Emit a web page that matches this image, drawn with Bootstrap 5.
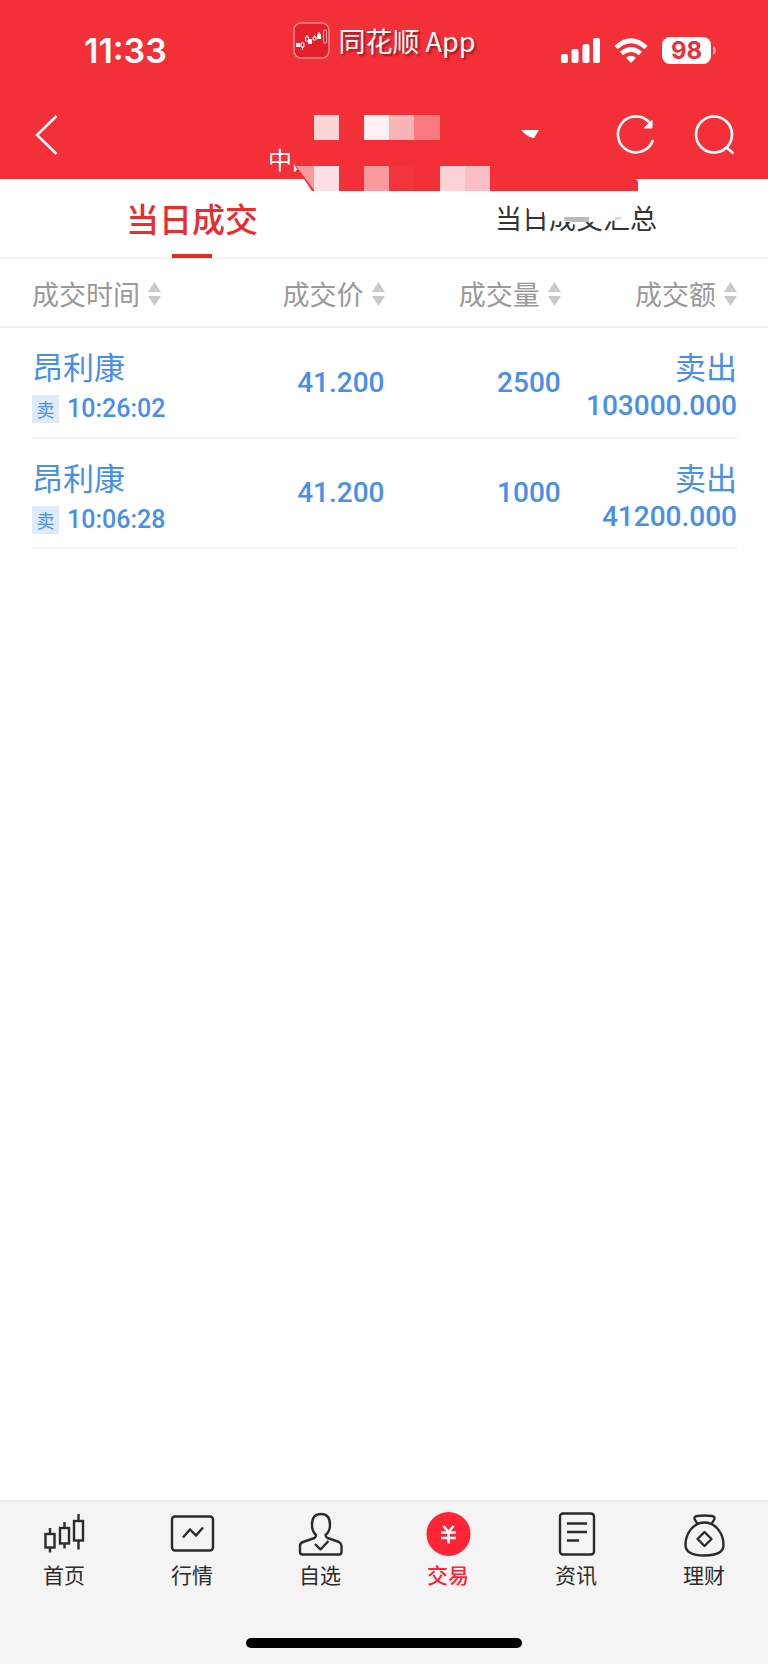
<!DOCTYPE html>
<html lang="zh-CN">
<head>
<meta charset="utf-8">
<meta name="viewport" content="width=device-width, initial-scale=1">
<title>当日成交</title>
<link href="https://cdn.jsdelivr.net/npm/bootstrap@5.3.0/dist/css/bootstrap.min.css" rel="stylesheet">
<style>
  body { font-family: "Noto Sans CJK SC", sans-serif; color: #333; background: #fff; }
  button { font-family: inherit; }
  .app-head { background: #f32f38; z-index: 2; }
  .status-row { height: 91px; padding: 10px 52px 0; }
  .side { flex: 1 1 0; }
  .clock { font: 600 34px/40px Inter, sans-serif; padding-left: 32px; }
  .signals { gap: 14px; }
  .brand { font-size: 27px; line-height: 32px; gap: 9px; padding-bottom: 20px; text-shadow: 2px 2px 2px rgba(110, 0, 0, .55); }
  .title-row { height: 88px; }
  .plain { border: 0; background: none; padding: 0; color: inherit; }
  .account { width: 232px; font-size: 24px; line-height: 32px; padding-bottom: 4px; }
  .account svg { left: 0; top: 0; pointer-events: none; }
  .tools { gap: 36px; }
  .tab-row { height: 80px; border-bottom: 2px solid #f1f1f1; }
  .tab-btn { font-size: 27px; line-height: 40px; }
  .tab-btn.active { font-size: 33px; font-weight: 500; color: #eb2b2e; }
  .tab-btn.active::after { content: ""; position: absolute; left: 50%; bottom: -1px; width: 40px; height: 4px; margin-left: -20px; background: #eb2729; }
  .tab-btn svg { left: 0; top: 0; pointer-events: none; }
  .deals-wrap { padding: 0 31px 0 32px; }
  .deals { table-layout: fixed; width: 100%; margin: 0; }
  .deals th, .deals td { padding: 0; text-align: right; vertical-align: middle; }
  .deals th:first-child, .deals td:first-child { text-align: left; }
  .deals thead tr { position: relative; height: 69px; }
  .deals th:first-child::after { content: ""; position: absolute; left: -32px; right: -31px; bottom: 0; height: 2px; background: #f1f1f1; }
  .deals thead button { font-size: 27px; line-height: 40px; color: #999; font-weight: 400; gap: 8px; }
  .deals tbody td { height: 110px; border-bottom: 2px solid #f5f5f5; color: #478fec; }
  .deals td.two-line { vertical-align: top; padding-top: 16px; }
  .stock { font-size: 31px; line-height: 44px; }
  .side-tag { width: 27px; height: 28px; font-size: 18px; line-height: 28px; background: #dfebfb; text-align: center; }
  .hour { font: 500 25px/42px Roboto, sans-serif; }
  .num { font: 500 28px/36px Roboto, sans-serif; }
  .bottom-nav { background: #f4f4f4; border-top: 2px solid #e9e9e9; }
  .bottom-nav a { color: #2b2b2b; font-size: 21px; line-height: 28px; padding-top: 10px; }
  .bottom-nav a.active { color: #ff2436; font-weight: 500; }
  .home-bar { width: 36%; height: 10px; border-radius: 5px; background: #000; margin: 50px auto 16px; }
</style>
</head>
<body>
<div class="min-vh-100 d-flex flex-column">
  <header class="app-head text-white position-relative">
    <div class="status-row d-flex align-items-center">
      <div class="side"><div class="clock">11:33</div></div>
      <div class="brand d-flex align-items-center">
        <svg width="37" height="37" viewBox="0 0 37 37" fill="none">
          <rect x="1" y="1" width="35" height="35" rx="7" fill="#e6202a" stroke="#ff8b8e" stroke-width="1.5"/>
          <path d="M3 21h4v4H3zM15 17h4v5h-4zM24 12h4v5h-4z" fill="#fff"/>
          <path d="M8 21h3v4H8zm1.500 4v3M12.500 15h3v4h-3zm1.500-2v2M20 15h3v3h-3zm1.500-2v2" stroke="#fff"/>
          <path d="M26 10v2" stroke="#fff"/><rect x="30.500" y="8" width="3" height="13" rx="1" stroke="#ffb0b0"/>
        </svg>
        <span>同花顺 App</span>
      </div>
      <div class="side signals d-flex justify-content-end align-items-center">
        <svg width="39" height="26" viewBox="0 0 39 26" fill="#fff"><rect y="16" width="7" height="9" rx="2"/><rect x="10.500" y="11" width="7" height="14" rx="2"/><rect x="21.500" y="6" width="7" height="19" rx="2"/><rect x="32" y="0" width="7" height="25" rx="2"/></svg>
        <svg width="34" height="26" viewBox="0 0 34 26" fill="none" stroke="#fff" stroke-width="4.600"><path d="M2 9.500Q17-4 32 9.500M7.500 15.500Q17 7.500 26.500 15.500"/><path d="M17 25l-5-5.300q5-3.700 10 0z" fill="#fff" stroke="none"/></svg>
        <svg width="54" height="27" viewBox="0 0 54 27"><rect width="49" height="27" rx="8" fill="#fff"/><path d="M51 9q3 1.500 3 4.500T51 18z" fill="#fff" opacity=".5"/><text x="24.500" y="22" text-anchor="middle" font-family="Inter, sans-serif" font-weight="700" font-size="24" fill="#e8303a">98</text></svg>
      </div>
    </div>
    <div class="title-row d-flex align-items-center px-4">
      <div class="side">
        <button class="plain d-block ps-2" type="button" aria-label="返回"><svg class="d-block" width="30" height="42" viewBox="0 0 30 42" fill="none" stroke="#fff" stroke-width="2.500"><path d="M24.500 2L5 21l19.500 19"/></svg></button>
      </div>
      <button class="account plain position-relative align-self-stretch d-flex align-items-end" type="button" aria-label="账户">
        <span>中国</span>
        <svg class="position-absolute" width="372" height="100" viewBox="0 0 372 100">
          <path d="M24 48v25h2l3 5 9 10h-2l8 12h326V91l-2-3V48z" fill="#f32f38"/>
          <path d="M29 78l9 10h-9z" fill="#f32f38"/>
          <path d="M28 75h18v24z" fill="#f99a9f"/>
          <path d="M46 24h25v25H46z" fill="#fdd5d6"/><path d="M96 24h25v25H96z" fill="#fff0f1"/>
          <path d="M121 24h25v25h-25z" fill="#f9b4b8"/><path d="M146 24h26v25h-26z" fill="#f87b80"/>
          <path d="M46 75h25v25H46z" fill="#fce0e3"/><path d="M96 75h25v25H96z" fill="#f99a9e"/>
          <path d="M121 75h25v25h-25z" fill="#f3343d"/><path d="M172 75h25v25h-25z" fill="#fbd3d6"/>
          <path d="M197 75h25v25h-25z" fill="#f9bfc4"/>
          <path d="M253 39h18l-5 8q-7-1-13-8z" fill="#fff"/>
        </svg>
      </button>
      <div class="side tools d-flex justify-content-end">
        <button class="plain position-relative" type="button" aria-label="刷新"><svg class="d-block" width="54" height="42" viewBox="0 0 54 42" fill="none" stroke="#fff" stroke-width="2.600"><path d="M45 8A18 18 0 1 0 49 26"/><path d="M48 6v8h-8z" fill="#fff" stroke="#fff" stroke-width="1"/></svg></button>
        <button class="plain me-2" type="button" aria-label="搜索"><svg class="d-block" width="42" height="42" viewBox="0 0 42 42" fill="none" stroke="#fff" stroke-width="2.600"><circle cx="20" cy="20.500" r="18"/><path d="M32 33l7.500 6.500"/></svg></button>
      </div>
    </div>
  </header>

  <nav class="tab-row d-flex">
    <button class="tab-btn active plain w-50 position-relative" type="button">当日成交</button>
    <button class="tab-btn plain w-50" type="button"><span class="position-relative d-inline-block">当日成交汇总
      <svg class="position-absolute" width="162" height="40" viewBox="0 0 162 40">
        <path d="M33 4v7l4 3h12v3l5 5 16 2h24l20-1 22-2V4z" fill="#fff"/>
        <path d="M69 19h25v5H79l-10-1z" fill="#bbb"/><path d="M120 19h8l-4 3h-4z" fill="#ddd"/>
      </svg></span></button>
  </nav>

  <main class="deals-wrap flex-grow-1">
    <svg class="d-none"><symbol id="sort" viewBox="0 0 13 24"><path d="M6.500 0L13 10H0zM6.500 24L13 14H0z" fill="#c9c9c9"/></symbol></svg>
    <table class="deals">
      <thead>
        <tr>
          <th scope="col"><button class="plain d-inline-flex align-items-center" type="button">成交时间<svg width="13" height="24"><use href="#sort"/></svg></button></th>
          <th scope="col"><button class="plain d-inline-flex align-items-center" type="button">成交价<svg width="13" height="24"><use href="#sort"/></svg></button></th>
          <th scope="col"><button class="plain d-inline-flex align-items-center" type="button">成交量<svg width="13" height="24"><use href="#sort"/></svg></button></th>
          <th scope="col"><button class="plain d-inline-flex align-items-center" type="button">成交额<svg width="13" height="24"><use href="#sort"/></svg></button></th>
        </tr>
      </thead>
      <tbody>
        <tr>
          <td class="two-line"><div class="stock">昂利康</div><div class="d-flex align-items-center gap-2"><span class="side-tag">卖</span><span class="hour">10:26:02</span></div></td>
          <td class="num">41.200</td>
          <td class="num">2500</td>
          <td class="two-line"><div class="stock">卖出</div><div class="num">103000.000</div></td>
        </tr>
        <tr>
          <td class="two-line"><div class="stock">昂利康</div><div class="d-flex align-items-center gap-2"><span class="side-tag">卖</span><span class="hour">10:06:28</span></div></td>
          <td class="num">41.200</td>
          <td class="num">1000</td>
          <td class="two-line"><div class="stock">卖出</div><div class="num">41200.000</div></td>
        </tr>
      </tbody>
    </table>
  </main>

  <footer class="bottom-nav">
    <nav class="row row-cols-6 g-0 text-center">
      <a class="col text-decoration-none" href="#"><svg class="d-block mx-auto" width="48" height="48" viewBox="0 0 48 48" fill="none" stroke="#2b2b2b" stroke-width="2.400"><rect x="5.500" y="22" width="9" height="13.500"/><path d="M10 16v6m0 13.500v5"/><rect x="20" y="16" width="9" height="15.500"/><path d="M24.500 10v6m0 15.500v5"/><rect x="34" y="9" width="9" height="19.500"/><path d="M38.500 2v7m0 19.500v9"/></svg>首页</a>
      <a class="col text-decoration-none" href="#"><svg class="d-block mx-auto" width="48" height="48" viewBox="0 0 48 48" fill="none" stroke="#2b2b2b" stroke-width="2.400"><rect x="4" y="4.500" width="41" height="34" rx="3"/><path d="M15 25.500l7-8 6 6 7-8"/></svg>行情</a>
      <a class="col text-decoration-none" href="#"><svg class="d-block mx-auto" width="48" height="48" viewBox="0 0 48 48" fill="none" stroke="#2b2b2b" stroke-width="2.400" stroke-linejoin="round"><path d="M20 23C17.500 21 16 17 16 12.500 16 5 19.500 2 25 2s9 3 9 10.500C34 17 32.500 21 29.500 23q0 2 2 3L43 30q2.500 1.500 2.500 4v6q0 2.500-2.500 2.500H6.500Q4 42.500 4 40v-6q0-3 3-4l11.500-4q1.500-1 1.500-3z"/><path d="M19 32l5.500 5.500 8-8.500"/></svg>自选</a>
      <a class="col text-decoration-none active" href="#"><svg class="d-block mx-auto" width="48" height="48" viewBox="0 0 48 48"><circle cx="24.500" cy="22" r="22" fill="#ff2436"/><path d="M19.500 14l5 6 5-6M17 20.500h15M17 26h15M24.500 19.500v12" fill="none" stroke="#fff" stroke-width="2.600"/></svg>交易</a>
      <a class="col text-decoration-none" href="#"><svg class="d-block mx-auto" width="48" height="48" viewBox="0 0 48 48" fill="none" stroke="#2b2b2b" stroke-width="2.400"><rect x="8" y="1.500" width="34" height="41" rx="3"/><path d="M15 11.500h20M15 20h20M15 28.500h12"/></svg>资讯</a>
      <a class="col text-decoration-none" href="#"><svg class="d-block mx-auto" width="48" height="48" viewBox="0 0 48 48" fill="none" stroke="#2b2b2b" stroke-width="2.400" stroke-linejoin="round"><path d="M17.500 12l-3-5q-.5-2.500 2.500-3 7.500-1 15 0 3 .5 2.500 3l-3 5"/><path d="M24.500 10.500C13 10.500 5.500 22 5.500 33q0 10.500 19 10.500T43.500 33C43.500 22 36 10.500 24.500 10.500z"/><path d="M24.500 20l7 7-7 7-7-7z"/></svg>理财</a>
    </nav>
    <div class="home-bar"></div>
  </footer>
</div>
<script src="https://cdn.jsdelivr.net/npm/bootstrap@5.3.0/dist/js/bootstrap.bundle.min.js"></script>
</body>
</html>
